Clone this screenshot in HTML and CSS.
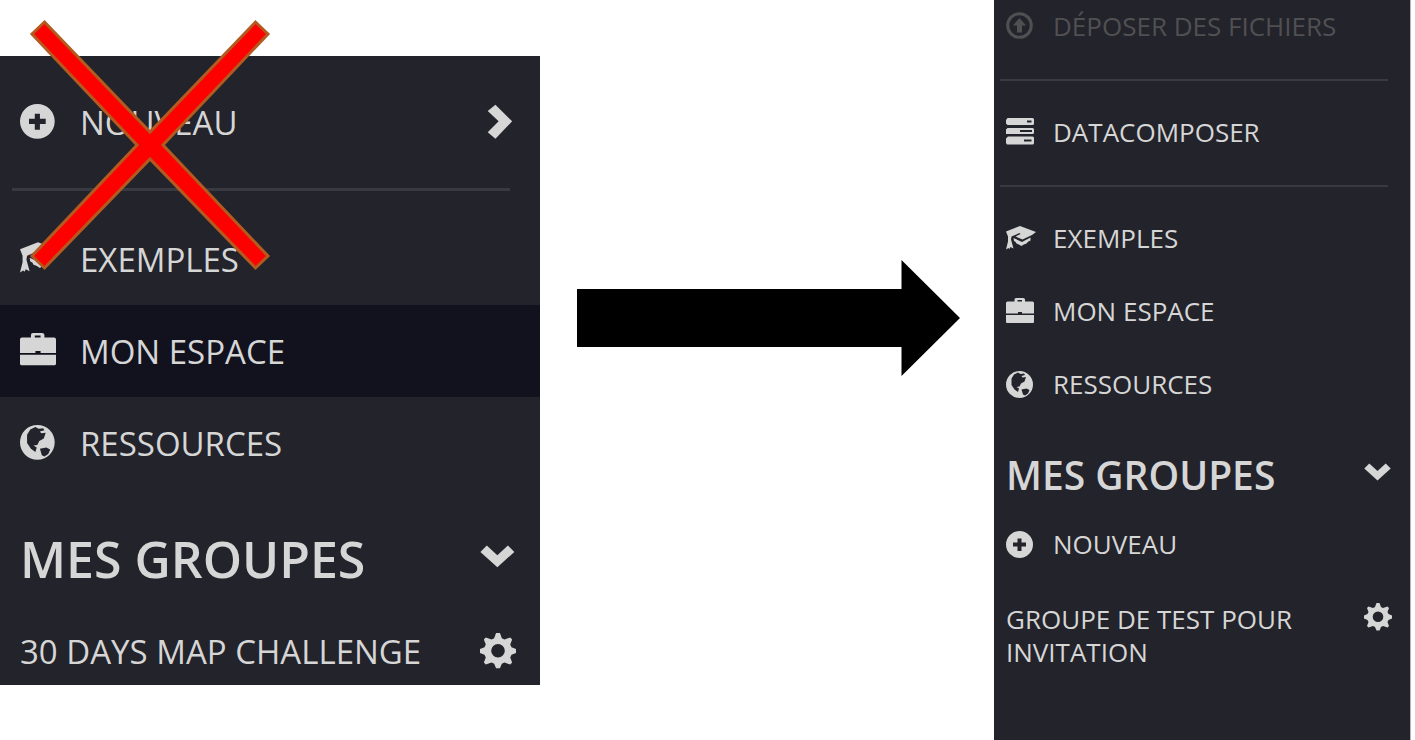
FILE: index.html
```html
<!DOCTYPE html>
<html lang="fr">
<head>
<meta charset="utf-8">
<title>Menu</title>
<link rel="stylesheet" href="styles.css">
</head>
<body>
<svg class="sprite" aria-hidden="true">
  <symbol id="plus" viewBox="0 0 28 28"><path fill-rule="evenodd" d="M13.500 0a13.500 13.500 0 1 0 0 27a13.500 13.500 0 1 0 0-27zM11.500 7.500h4V11.500h4.500v4H15.500v4.500h-4V15.500H7v-4h4.500z"/></symbol>
  <symbol id="upload" viewBox="0 0 28 28"><circle cx="13.500" cy="13.500" r="11.800" fill="none" stroke="currentColor" stroke-width="3"/><path d="M13.500 6l6.500 7.500H16v7h-5v-7H7z"/></symbol>
  <symbol id="server" viewBox="0 0 28 28"><path fill-rule="evenodd" d="M1.500 -1h25q1.500 0 1.500 1.500v4q0 1.500-1.500 1.500H1.500L0 4.500V1zM21 1.500v2h4.500v-2zM1.500 9H26.500q1.500 0 1.500 1.500v3q0 1.500-1.500 1.500H0v-4.500zM14 11v2h12v-2zM2 17.500h24.500q1.500 0 1.500 1.500v5q0 1.500-1.500 1.500H1l-1-1.500V19.500zM18 20.500v2h7.500v-2z"/></symbol>
  <symbol id="cap" viewBox="0 0 28 28"><path d="M0 6.500L14 1l16 6-4 3-9.500 4.500-7-3 5-2.500-1-1-8 3.500-.5 3 2.500 9-3-1.500-1 2-1-1-2.500 1.500 2-8v-5zM7.500 13l8.500 4 8.500-4.500v3q-3 1-4 3-3 .5-5 2.500-3-2-5-2.500-.5-2-2.500-2.500z"/></symbol>
  <symbol id="case" viewBox="0 0 28 28"><path fill-rule="evenodd" d="M8.500 3.500V1.500q0-1.500 1.500-1.500h7q2 0 2 1.500v2h7.500Q28 3.500 28 5V15.500H16v-1.500h-4v1.500H0V5Q0 3.500 1.500 3.500zM11.500 3.500h4.500V2h-4.500zM0 17h28v7q0 1-1 1H1q-1 0-1-1z"/></symbol>
  <symbol id="globe" viewBox="0 0 28 28"><path fill-rule="evenodd" d="M13.500 0a13.500 13.500 0 1 0 0 27a13.500 13.500 0 1 0 0-27zM8 3.500l4-2 2.500 1.500 3.500-.5 1 1.500-3.500 1 1 1.500 3.500-.5-1.500 4.500-3.500 2-1.500 3-3 .5 2.500 1.500-1 3.500-3.500-2.500-3-4.500V7.500zM15.500 18.500l5-1 3 1.500-1.500 3.500-3 2-2-1z"/></symbol>
  <symbol id="down" viewBox="0 0 28 28"><path d="M.3 8.500L5.300 3.500 13.500 11 21.700 3.500 26.700 8.500 13.500 20.500z"/></symbol>
  <symbol id="right" viewBox="0 0 28 28"><path d="M6 5.500L12 .5l13 13L12 27 6 22 14.500 13.500z"/></symbol>
  <symbol id="gear" viewBox="0 0 28 28"><path fill-rule="evenodd" d="M12.500 0h3l1.500 4 2 1 4.500-1.500 1.500 1.500-1.500 4 1 2 3.500 1.500v3L24.500 17l-1 2 1.500 4-1.500 1.500-4.500-1.500-2 1-1.500 3.500h-3L11 24l-2-1-4.500 1.500-1.500-1.500 1.500-4-1-2L0 15.500V12.500l3.500-1.500 1-2-1.500-4L4.500 3.500l4.500 1.500 2-1zM14 8.500a5.300 5.300 0 1 0 0 10.600a5.300 5.300 0 1 0 0-10.600z"/></symbol>
</svg>
<main class="board">
  <div class="before">
    <nav class="panel large" aria-label="Menu actuel">
      <a class="row" href="#"><svg class="icon"><use href="#plus"/></svg><span class="label">NOUVEAU</span><svg class="icon"><use href="#right"/></svg></a>
      <hr>
      <a class="row" href="#"><svg class="icon"><use href="#cap"/></svg><span class="label">EXEMPLES</span></a>
      <a class="row active" href="#" aria-current="page"><svg class="icon"><use href="#case"/></svg><span class="label">MON ESPACE</span></a>
      <a class="row" href="#"><svg class="icon"><use href="#globe"/></svg><span class="label">RESSOURCES</span></a>
      <button class="row heading" type="button"><span class="label">MES GROUPES</span><svg class="icon"><use href="#down"/></svg></button>
      <div class="row group"><a class="label" href="#">30 DAYS MAP CHALLENGE</a><button type="button" class="tool" aria-label="Paramètres"><svg class="icon"><use href="#gear"/></svg></button></div>
    </nav>
    <svg class="cross" viewBox="0 0 240 250" aria-hidden="true"><path d="M14.500 22L120 132 225.500 22 238 34 133 145 238 256 225.500 268 120 159 14.500 268 2 256 107 145 2 34z" transform="translate(0 -20)"/></svg>
  </div>
  <div class="between">
    <svg viewBox="0 0 383 117" role="img" aria-label="devient"><path d="M0 29H324.500V0L383 58 324.500 116V87H0z"/></svg>
  </div>
  <nav class="panel small" aria-label="Nouveau menu">
    <button class="row first" type="button" disabled><svg class="icon"><use href="#upload"/></svg><span class="label">DÉPOSER DES FICHIERS</span></button>
    <hr>
    <a class="row" href="#"><svg class="icon"><use href="#server"/></svg><span class="label">DATACOMPOSER</span></a>
    <hr>
    <a class="row" href="#"><svg class="icon"><use href="#cap"/></svg><span class="label">EXEMPLES</span></a>
    <a class="row" href="#"><svg class="icon"><use href="#case"/></svg><span class="label">MON ESPACE</span></a>
    <a class="row" href="#"><svg class="icon"><use href="#globe"/></svg><span class="label">RESSOURCES</span></a>
    <button class="row heading" type="button"><span class="label">MES GROUPES</span><svg class="icon"><use href="#down"/></svg></button>
    <a class="row" href="#"><svg class="icon"><use href="#plus"/></svg><span class="label">NOUVEAU</span></a>
    <div class="row group"><a class="label" href="#">GROUPE DE TEST POUR INVITATION</a><button type="button" class="tool" aria-label="Paramètres"><svg class="icon"><use href="#gear"/></svg></button></div>
  </nav>
</main>
</body>
</html>
```
FILE: styles.css
```css
* { box-sizing: border-box; }
body {
  margin: 0;
  background: #fff;
  font-family: "Open Sans", "Noto Sans", sans-serif;
}
.sprite { display: none; }
symbol { overflow: visible; }
.board {
  display: grid;
  grid-template-columns: 540fr 454fr 421fr;
  min-height: 100vh;
}
.before {
  position: relative;
  padding-top: 56px;
}
.cross {
  position: absolute;
  top: 20px;
  left: 30px;
  width: 240px;
  height: 250px;
  fill: #f00;
  stroke: #b35a20;
  stroke-width: 3;
  overflow: visible;
  pointer-events: none;
}
.between { padding: 260px 34px 0 37px; }
.between svg { display: block; width: 100%; }

.panel {
  background: #23232b;
  color: #d6d6d6;
}
.panel hr {
  border: 0;
  background: #393941;
}
.row {
  display: flex;
  align-items: center;
  width: 100%;
  border: 0;
  background: none;
  color: inherit;
  font: inherit;
  text-align: left;
  text-decoration: none;
}
.label {
  flex: 1;
  color: inherit;
  text-decoration: none;
}
.icon {
  display: block;
  flex: none;
  fill: currentColor;
  overflow: visible;
}
.tool {
  padding: 0;
  border: 0;
  background: none;
  color: inherit;
}
.active { background: #12121f; }
.heading { font-weight: 600; }
.row:disabled { color: #505052; }

.large {
  padding-top: 20px;
  font-size: 33px;
}
.large .row {
  gap: 24px;
  min-height: 92px;
  padding: 0 24px 0 20px;
}
.large .icon { width: 36px; height: 36px; }
.large hr {
  height: 3px;
  margin: 20px 30px 22px 12px;
}
.large .heading {
  min-height: 84px;
  margin-top: 28px;
  font-size: 50px;
}
.large .group {
  min-height: 84px;
  padding-top: 16px;
}

.small {
  margin-right: 4px;
  border-right: 1px solid #b4b4bc;
  font-size: 26px;
  line-height: 33px;
}
.small .row {
  gap: 19px;
  min-height: 73px;
  padding: 0 18px 0 12px;
}
.small .icon { width: 28px; height: 28px; }
.small hr {
  height: 2px;
  margin: 16px 22px 15px 6px;
}
.small .first { min-height: 52px; margin-bottom: 27px; }
.small .heading {
  min-height: 68px;
  margin-top: 19px;
  font-size: 39px;
}
.small .group {
  align-items: flex-start;
  padding-top: 22px;
}
```
